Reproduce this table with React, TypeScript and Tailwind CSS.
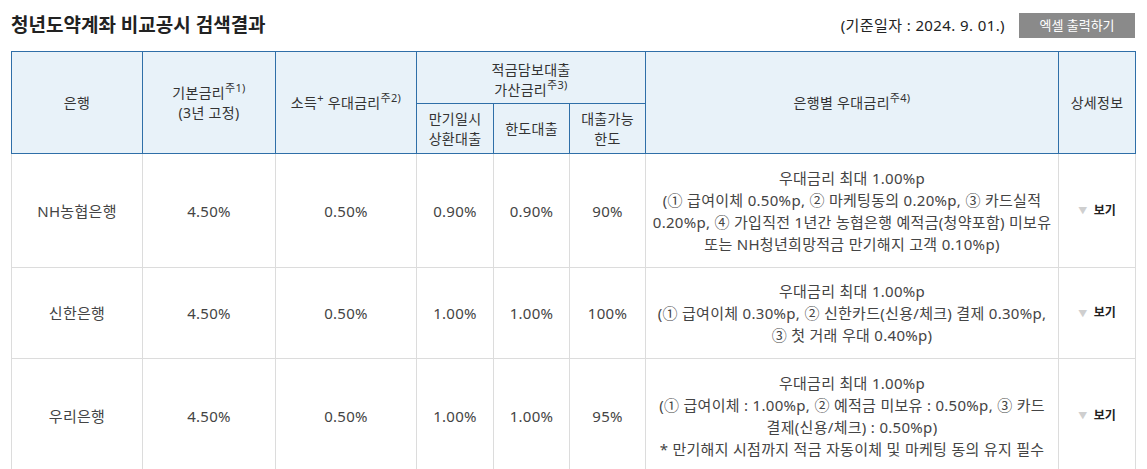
import React from "react";

const font = { fontFamily: '"Noto Sans", "Noto Sans CJK KR", sans-serif' };

function Sup({ children }: { children: React.ReactNode }) {
  return <span className="text-[11px] relative -top-[6px] leading-none">{children}</span>;
}

function View() {
  return (
    <div className="flex items-center justify-center gap-[6px]">
      <span className="text-[9px] text-[#cfcfcf] leading-none">▼</span>
      <span className="text-[12px] font-bold text-[#222] tracking-normal">보기</span>
    </div>
  );
}

const rows = [
  {
    bank: "NH농협은행",
    base: "4.50%",
    income: "0.50%",
    a: "0.90%",
    b: "0.90%",
    c: "90%",
    h: "h-[114px]",
    pref: [
      "우대금리 최대 1.00%p",
      "(① 급여이체 0.50%p, ② 마케팅동의 0.20%p, ③ 카드실적",
      "0.20%p, ④ 가입직전 1년간 농협은행 예적금(청약포함) 미보유",
      "또는 NH청년희망적금 만기해지 고객 0.10%p)",
    ],
  },
  {
    bank: "신한은행",
    base: "4.50%",
    income: "0.50%",
    a: "1.00%",
    b: "1.00%",
    c: "100%",
    h: "h-[91px]",
    pref: [
      "우대금리 최대 1.00%p",
      "(① 급여이체 0.30%p, ② 신한카드(신용/체크) 결제 0.30%p,",
      "③ 첫 거래 우대 0.40%p)",
    ],
  },
  {
    bank: "우리은행",
    base: "4.50%",
    income: "0.50%",
    a: "1.00%",
    b: "1.00%",
    c: "95%",
    h: "h-[114px]",
    pref: [
      "우대금리 최대 1.00%p",
      "(① 급여이체 : 1.00%p, ② 예적금 미보유 : 0.50%p, ③ 카드",
      "결제(신용/체크) : 0.50%p)",
      "* 만기해지 시점까지 적금 자동이체 및 마케팅 동의 유지 필수",
    ],
  },
];

export default function App() {
  const th = "border border-[#2f6fa8] bg-[#e8f2f9] font-normal text-[#333] text-[14px] tracking-[0.3px] leading-[20px] text-center align-middle";
  const td = "border border-[#dcdcdc] text-center align-middle text-[15px] tracking-[0.3px] leading-[22px] text-[#444]";
  return (
    <div className="w-[1147px] h-[469px] overflow-hidden bg-white" style={font}>
      <div className="flex items-center justify-between pl-[11px] pr-[12px] pt-[11px] h-[40px]">
        <h1 className="text-[19px] font-bold text-[#222]">청년도약계좌 비교공시 검색결과</h1>
        <div className="flex items-center gap-[14px]">
          <span className="text-[15px] text-[#222] tracking-[0.4px]">(기준일자 : 2024. 9. 01.)</span>
          <button className="w-[116px] h-[25px] bg-[#8a8a8a] text-white text-[13px] leading-[25px]">엑셀 출력하기</button>
        </div>
      </div>
      <div className="pl-[11px] pt-[11px]">
        <table className="border-collapse table-fixed w-[1124px]">
          <colgroup>
            <col className="w-[131px]" />
            <col className="w-[133px]" />
            <col className="w-[141px]" />
            <col className="w-[77px]" />
            <col className="w-[76px]" />
            <col className="w-[76px]" />
            <col className="w-[413px]" />
            <col className="w-[77px]" />
          </colgroup>
          <thead>
            <tr className="h-[52px]">
              <th rowSpan={2} className={th}>은행</th>
              <th rowSpan={2} className={th}>
                기본금리<Sup>주1)</Sup>
                <br />(3년 고정)
              </th>
              <th rowSpan={2} className={th}>
                소득<Sup>+</Sup> 우대금리<Sup>주2)</Sup>
              </th>
              <th colSpan={3} className={th + " leading-[17px] pt-[4px]"}>
                적금담보대출
                <br />가산금리<Sup>주3)</Sup>
              </th>
              <th rowSpan={2} className={th}>
                은행별 우대금리<Sup>주4)</Sup>
              </th>
              <th rowSpan={2} className={th}>상세정보</th>
            </tr>
            <tr className="h-[50px]">
              <th className={th}>
                만기일시
                <br />상환대출
              </th>
              <th className={th}>한도대출</th>
              <th className={th}>
                대출가능
                <br />한도
              </th>
            </tr>
          </thead>
          <tbody>
            {rows.map((r) => (
              <tr key={r.bank} className={r.h}>
                <td className={td + " text-[#222]"}>{r.bank}</td>
                <td className={td}>{r.base}</td>
                <td className={td}>{r.income}</td>
                <td className={td}>{r.a}</td>
                <td className={td}>{r.b}</td>
                <td className={td}>{r.c}</td>
                <td className={td}>
                  {r.pref.map((l, i) => (
                    <div key={i} className="whitespace-nowrap">{l}</div>
                  ))}
                </td>
                <td className={td}>
                  <View />
                </td>
              </tr>
            ))}
          </tbody>
        </table>
      </div>
    </div>
  );
}
